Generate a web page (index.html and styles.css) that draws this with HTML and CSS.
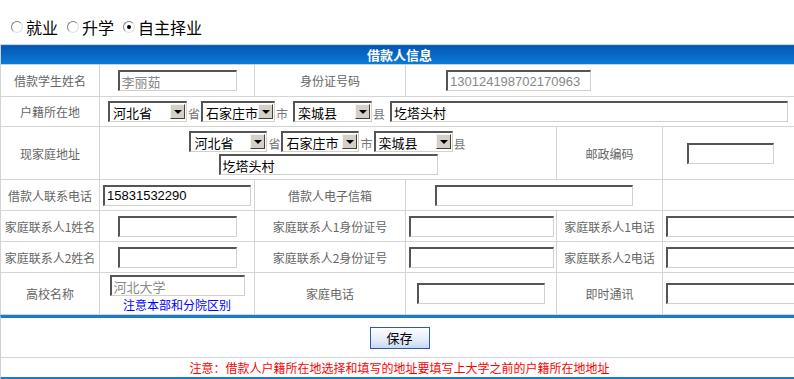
FILE: index.html
```html
<!DOCTYPE html>
<html lang="zh-CN">
<head>
<meta charset="UTF-8">
<title>借款人信息</title>
<link rel="stylesheet" href="styles.css">
</head>
<body>
<div class="choice">
    <label><input type="radio" name="quxiang">就业</label>
    <label><input type="radio" name="quxiang">升学</label>
    <label><input type="radio" name="quxiang" checked>自主择业</label>
</div>
<table class="info">
    <colgroup>
        <col class="c1"><col class="c2"><col class="c3"><col class="c4"><col class="c5"><col class="c6">
    </colgroup>
    <tr class="head"><th colspan="6">借款人信息</th></tr>
    <tr class="r1">
        <td class="lbl">借款学生姓名</td>
        <td><input class="txt ro w119" value="李丽茹" readonly></td>
        <td class="lbl">身份证号码</td>
        <td colspan="3" class="idcell"><input class="txt ro w145" value="130124198702170963" readonly></td>
    </tr>
    <tr class="r2">
        <td class="lbl">户籍所在地</td>
        <td colspan="5" class="addr">
            <span class="sel w79"><select><option>河北省</option></select><span class="arrow"></span></span><span class="unit">省</span><span class="sel w74"><select><option>石家庄市</option></select><span class="arrow"></span></span><span class="unit gap">市</span><span class="sel w79"><select><option>栾城县</option></select><span class="arrow"></span></span><span class="unit gap">县</span><input class="txt w398" value="圪塔头村">
        </td>
    </tr>
    <tr class="r3">
        <td class="lbl">现家庭地址</td>
        <td colspan="3" class="home">
            <div class="line"><span class="sel w78"><select><option>河北省</option></select><span class="arrow"></span></span><span class="unit">省</span><span class="sel w78"><select><option>石家庄市</option></select><span class="arrow"></span></span><span class="unit">市</span><span class="sel w79"><select><option>栾城县</option></select><span class="arrow"></span></span><span class="unit">县</span></div>
            <div class="line"><input class="txt w219" value="圪塔头村"></div>
        </td>
        <td class="lbl">邮政编码</td>
        <td><input class="txt w87"></td>
    </tr>
    <tr class="r4">
        <td class="lbl">借款人联系电话</td>
        <td><input class="txt w148" value="15831532290"></td>
        <td class="lbl">借款人电子信箱</td>
        <td colspan="2"><input class="txt w198"></td>
        <td></td>
    </tr>
    <tr class="r5">
        <td class="lbl">家庭联系人1姓名</td>
        <td><input class="txt w119"></td>
        <td class="lbl">家庭联系人1身份证号</td>
        <td><input class="txt w145"></td>
        <td class="lbl">家庭联系人1电话</td>
        <td><input class="txt w130"></td>
    </tr>
    <tr class="r5">
        <td class="lbl">家庭联系人2姓名</td>
        <td><input class="txt w119"></td>
        <td class="lbl">家庭联系人2身份证号</td>
        <td><input class="txt w145"></td>
        <td class="lbl">家庭联系人2电话</td>
        <td><input class="txt w130"></td>
    </tr>
    <tr class="r7">
        <td class="lbl">高校名称</td>
        <td class="school">
            <input class="txt ro w135" value="河北大学" readonly>
            <div class="hint">注意本部和分院区别</div>
        </td>
        <td class="lbl">家庭电话</td>
        <td><input class="txt w128"></td>
        <td class="lbl">即时通讯</td>
        <td><input class="txt w130"></td>
    </tr>
</table>
<div class="actions">
    <div class="save-row"><button class="save">保存</button></div>
    <div class="note">注意：借款人户籍所在地选择和填写的地址要填写上大学之前的户籍所在地地址</div>
</div>
</body>
</html>
```
FILE: styles.css
```css
html, body {
    margin: 0;
    overflow: hidden;
}
body {
    font-family: "Noto Sans CJK SC", sans-serif;
    font-size: 12px;
    color: #000;
    background: #fff;
    width: 798px;
}
.choice {
    height: 44px;
    box-sizing: border-box;
    padding: 9px 0 0 11px;
    display: flex;
    align-items: center;
    font-size: 16px;
}
.choice label {
    display: flex;
    align-items: center;
    margin-right: 9px;
}
.choice input {
    appearance: none;
    width: 12px;
    height: 12px;
    margin: 0 3px 0 0;
    border-radius: 50%;
    border: 1px solid;
    border-color: #808080 #e0e0e0 #e0e0e0 #808080;
    background: #fff;
    box-sizing: border-box;
    position: relative;
}
.choice input:checked::after {
    content: "";
    position: absolute;
    left: 3px;
    top: 3px;
    width: 4px;
    height: 4px;
    border-radius: 50%;
    background: #000;
}
.info {
    width: 798px;
    table-layout: fixed;
    border-collapse: collapse;
    border: 1px solid #d0d0d0;
}
.c1 { width: 99px; }
.c2 { width: 155px; }
.c3 { width: 151px; }
.c4 { width: 151px; }
.c5 { width: 106px; }
.c6 { width: 136px; }
.info th {
    height: 19px;
    padding: 0;
    color: #fff;
    font-size: 13px;
    font-weight: bold;
    background: linear-gradient(#0456b2, #0a7cd8);
    border: 1px solid #d0d0d0;
    line-height: 18px;
}
.info td {
    border: 1px solid #d4d4d4;
    padding: 0;
    text-align: center;
    vertical-align: middle;
    white-space: nowrap;
}
.info td.lbl {
    color: #666;
}
.r1 { height: 32px; }
.r2 { height: 30px; }
.r3 { height: 53px; }
.r4, .r5 { height: 31px; }
.r7 { height: 42px; }
.info td.idcell {
    text-align: left;
    padding-left: 40px;
}
.info td.addr {
    text-align: left;
    padding-left: 8px;
}
.addr, .line {
    font-size: 0;
}
.line + .line {
    margin-top: 2px;
}
.txt {
    height: 21px;
    box-sizing: border-box;
    margin: 0;
    padding: 0 2px;
    border-style: solid;
    border-width: 2px 1px 1px 2px;
    border-color: #555 #d4d0c8 #d4d0c8 #555;
    font-family: "Liberation Sans", "Noto Sans CJK SC", sans-serif;
    font-size: 13px;
    color: #000;
    background: #fff;
    vertical-align: middle;
    outline: none;
}
.txt.ro { color: #888; }
.w87 { width: 87px; }
.w119 { width: 119px; }
.w128 { width: 128px; }
.w130 { width: 130px; }
.w135 { width: 135px; }
.w145 { width: 145px; }
.w148 { width: 148px; }
.w198 { width: 198px; }
.w219 { width: 219px; }
.w398 { width: 398px; }
.sel {
    display: inline-block;
    position: relative;
    height: 21px;
    vertical-align: middle;
}
.w74 { width: 74px; }
.w78 { width: 78px; }
.w79 { width: 79px; }
.sel select {
    appearance: none;
    width: 100%;
    height: 21px;
    margin: 0;
    padding: 0 0 0 3px;
    border-style: solid;
    border-width: 2px 1px 1px 2px;
    border-color: #555 #d4d0c8 #d4d0c8 #555;
    border-radius: 0;
    background: #fff;
    font-family: "Noto Sans CJK SC", sans-serif;
    font-size: 13px;
    color: #000;
    outline: none;
}
.sel .arrow {
    position: absolute;
    right: 2px;
    top: 3px;
    width: 15px;
    height: 15px;
    box-sizing: border-box;
    background: #d4d0c8;
    border: 1px solid;
    border-color: #f4f4f4 #404040 #404040 #f4f4f4;
}
.sel .arrow::after {
    content: "";
    position: absolute;
    left: 3px;
    top: 5px;
    border-left: 4px solid transparent;
    border-right: 4px solid transparent;
    border-top: 4px solid #000;
}
.unit {
    display: inline-block;
    font-size: 12px;
    color: #777;
    vertical-align: middle;
    margin: 4px 1px 0;
}
.unit.gap {
    margin-right: 5px;
}
.hint {
    color: #0000ff;
    margin-top: 2px;
    line-height: 14px;
}
.actions {
    width: 798px;
    border-left: 1px solid #d0d0d0;
    border-top: 3px solid #1a7cc8;
    border-bottom: 3px solid #1a7cc8;
    box-sizing: border-box;
}
.save-row {
    height: 39px;
    border-bottom: 1px solid #d4d4d4;
    display: flex;
    align-items: center;
    justify-content: center;
}
.save {
    width: 60px;
    height: 22px;
    padding: 0;
    font-family: "Noto Sans CJK SC", sans-serif;
    font-size: 13px;
    color: #000;
    border: 1px solid #2a5aa8;
    background: linear-gradient(#fdfdff, #e4ecfa 60%, #c8d8f2);
    cursor: pointer;
}
.note {
    height: 19px;
    line-height: 19px;
    text-align: center;
    color: #ff0000;
}
```
